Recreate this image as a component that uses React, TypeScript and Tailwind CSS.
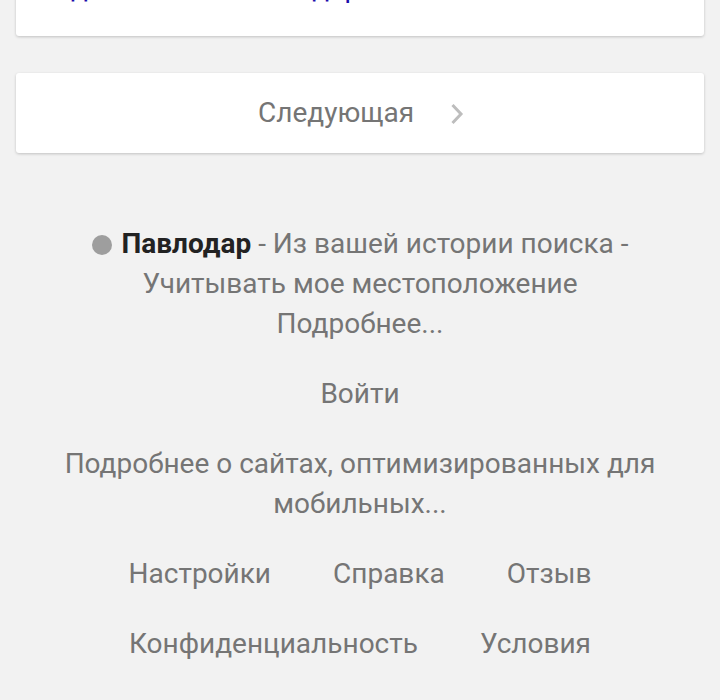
const links = [
  ['Настройки', 'Справка', 'Отзыв'],
  ['Конфиденциальность', 'Условия'],
]

export default function App() {
  return (
    <div className="min-h-[700px] overflow-hidden bg-[#f2f2f2] text-[28px] leading-[40px] text-[#757575]" style={{ fontFamily: 'Roboto, "Noto Sans", sans-serif' }}>
      {/* конец предыдущей карточки */}
      <div className="mx-4 -mt-8 rounded-[3px] bg-white pb-7 pl-[43px] shadow-[0_1px_3px_rgba(0,0,0,0.2)]">
        <p className="whitespace-nowrap text-[#1a0dab]">Где поесть в Павлодаре</p>
      </div>

      <div className="mx-4 mt-[37px] flex h-20 items-center justify-center gap-[36px] rounded-[3px] bg-white pl-[2px] shadow-[0_1px_3px_rgba(0,0,0,0.2)]">
        <span>Следующая</span>
        <svg width="14" height="22" viewBox="0 0 14 22" className="mt-[2px]">
          <path d="M2.5 2 L11 11 L2.5 20" fill="none" stroke="#bdbdbd" strokeWidth="3" />
        </svg>
      </div>

      <div className="mt-[71px] px-10 text-center">
        <p>
          <span className="mr-[10px] inline-block h-5 w-5 translate-y-[2px] rounded-full bg-[#9e9e9e]" />
          <b className="font-bold text-[#222]">Павлодар</b> - Из вашей истории поиска -
          <br />
          Учитывать мое местоположение
          <br />
          Подробнее...
        </p>
        <p className="mt-[30px]">Войти</p>
        <p className="mt-[30px]">
          Подробнее о сайтах, оптимизированных для
          <br />
          мобильных...
        </p>
        {links.map((row, i) => (
          <div key={i} className="mt-[30px] flex justify-center gap-[62px]">
            {row.map(l => (
              <span key={l}>{l}</span>
            ))}
          </div>
        ))}
      </div>
    </div>
  )
}
